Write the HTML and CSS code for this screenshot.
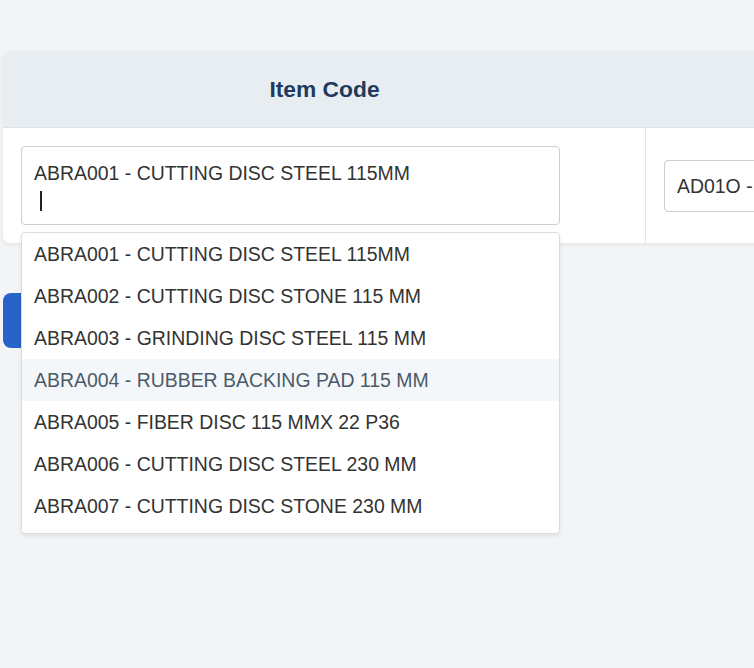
FILE: index.html
```html
<!DOCTYPE html>
<html>
<head>
<meta charset="utf-8">
<link rel="stylesheet" href="styles.css">
</head>
<body>
<div class="page">
  <div class="card">
    <div class="row head">
      <div class="cell c1">Item Code</div>
      <div class="cell c2"></div>
    </div>
    <div class="row body">
      <div class="cell c1">
        <div class="combo">
          <div class="field">
            <div class="value">ABRA001 - CUTTING DISC STEEL 115MM</div>
            <div class="caret"></div>
          </div>
          <ul class="menu">
            <li>ABRA001 - CUTTING DISC STEEL 115MM</li>
            <li>ABRA002 - CUTTING DISC STONE 115 MM</li>
            <li>ABRA003 - GRINDING DISC STEEL 115 MM</li>
            <li class="hover">ABRA004 - RUBBER BACKING PAD 115 MM</li>
            <li>ABRA005 - FIBER DISC 115 MMX 22 P36</li>
            <li>ABRA006 - CUTTING DISC STEEL 230 MM</li>
            <li>ABRA007 - CUTTING DISC STONE 230 MM</li>
          </ul>
        </div>
      </div>
      <div class="cell c2">
        <div class="field2">AD01O - ACETYLENE DISSOLVED</div>
      </div>
    </div>
  </div>
  <button class="btn" aria-label="Save"></button>
</div>
</body>
</html>
```
FILE: styles.css
```css
html, body {
  margin: 0;
  padding: 0;
  background: #f3f4f6;
  overflow: hidden;
  height: 100%;
}
body {
  font-family: "Liberation Sans", Arial, sans-serif;
  color: #333;
}
.page {
  padding: 52px 0 0 3px;
  width: 1200px;
}
.card {
  background: #fff;
  border-radius: 6px;
  box-shadow: 0 1px 4px rgba(0,0,0,0.08);
  width: 1100px;
}
.row {
  display: grid;
  grid-template-columns: 643px 1fr;
}
.head {
  background: #e8edf2;
  height: 75px;
  border-bottom: 1px solid #dce2e8;
  border-radius: 6px 6px 0 0;
}
.head .cell {
  display: flex;
  align-items: center;
  justify-content: center;
  font-weight: bold;
  font-size: 22.8px;
  color: #1f3a5c;
}
.body {
  height: 115px;
}
.body .cell {
  display: flex;
  align-items: center;
  padding-left: 18px;
}
.body .c1 {
  border-right: 1px solid #e3e6ea;
}
.combo {
  position: relative;
  width: 539px;
}
.field {
  box-sizing: border-box;
  height: 79px;
  border: 1px solid #cfcfcf;
  border-radius: 4px;
  padding: 14px 12px 0 12px;
  font-size: 19.45px;
  line-height: 24px;
}
.caret {
  width: 2px;
  height: 20px;
  background: #222;
  margin: 6px 0 0 6px;
}
.menu {
  position: absolute;
  top: 86px;
  left: 0;
  right: 0;
  margin: 0;
  padding: 0 0 6px 0;
  list-style: none;
  background: #fff;
  border: 1px solid #dcdcdc;
  border-radius: 4px;
  box-shadow: 0 2px 4px rgba(0,0,0,0.08);
  z-index: 5;
}
.menu li {
  height: 42px;
  line-height: 42px;
  padding-left: 12px;
  font-size: 19.45px;
  color: #333;
}
.menu li.hover {
  background: #f4f7fa;
  color: #4b5a69;
}
.field2 {
  box-sizing: border-box;
  height: 52px;
  width: 400px;
  border: 1px solid #cfcfcf;
  border-radius: 4px;
  padding: 0 12px;
  line-height: 50px;
  font-size: 19.45px;
  white-space: nowrap;
  overflow: hidden;
}
.btn {
  display: block;
  margin-top: 50px;
  width: 180px;
  height: 55px;
  border: none;
  border-radius: 8px;
  background: #2763c8;
}
```
